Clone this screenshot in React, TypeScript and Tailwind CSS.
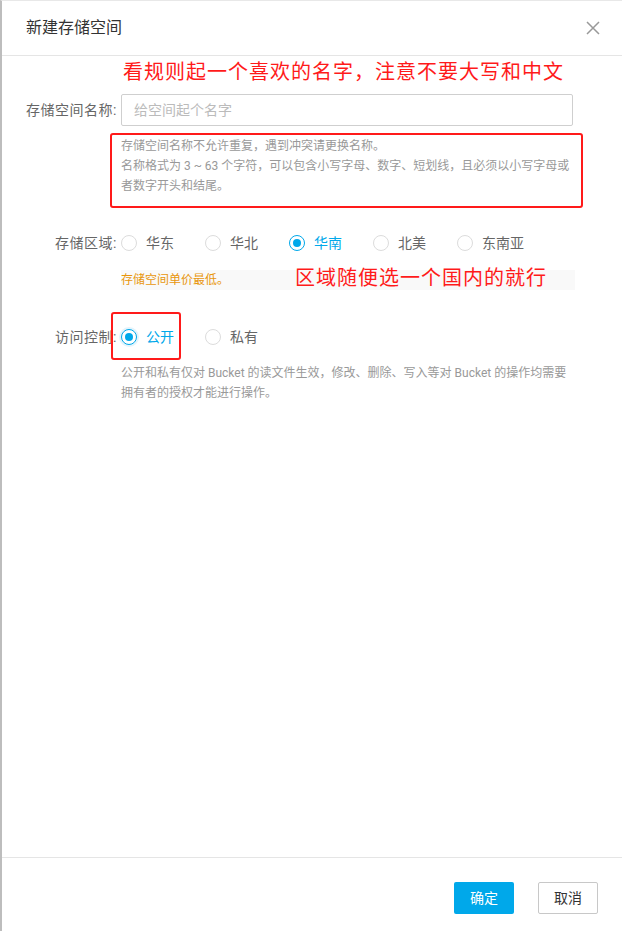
import React from "react";

const regions = ["华东", "华北", "华南", "北美", "东南亚"];

function Radio({
  label,
  checked,
  halo,
}: {
  label: string;
  checked?: boolean;
  halo?: boolean;
}) {
  return (
    <div className="flex w-[84px] items-center">
      <span
        className={
          checked
            ? "flex h-[16px] w-[16px] items-center justify-center rounded-full border border-[#00a8ea] bg-white"
            : "h-[16px] w-[16px] rounded-full border border-[#dcdcdc] bg-white"
        }
        style={halo ? { boxShadow: "0 0 0 2px #e3f4fc" } : undefined}
      >
        {checked && <span className="h-[8px] w-[8px] rounded-full bg-[#00a8ea]" />}
      </span>
      <span
        className={
          checked
            ? "ml-[9px] text-[14px] leading-[20px] text-[#00a8ea]"
            : "ml-[9px] text-[14px] leading-[20px] text-[#666]"
        }
      >
        {label}
      </span>
    </div>
  );
}

export default function App() {
  return (
    <div className="flex h-[931px] w-[622px] flex-col border-l-2 border-t border-l-[#bdbdbd] border-t-[#e8e8e8] bg-white font-['Roboto','Noto_Sans_CJK_SC',sans-serif]">
      {/* header */}
      <div className="flex h-[55px] shrink-0 items-center justify-between border-b border-[#e5e5e5] pl-[24px] pr-[22px]">
        <span className="text-[16px] text-[#333]">新建存储空间</span>
        <svg width="14" height="14" viewBox="0 0 14 14" className="mt-[-1px]">
          <path d="M1 1L13 13M13 1L1 13" stroke="#999" strokeWidth="1.5" fill="none" />
        </svg>
      </div>

      {/* body */}
      <div className="flex-1">
        <div className="ml-[121px] mt-[2px] text-[20px] leading-[28px] tracking-[1px] text-[#ff1a1a]">
          看规则起一个喜欢的名字，注意不要大写和中文
        </div>

        <div className="mt-[8px] flex items-center">
          <label className="w-[115px] text-right text-[14px] tracking-[0.5px] text-[#666]">存储空间名称:</label>
          <div className="ml-[4px] flex h-[32px] w-[452px] items-center rounded-[2px] border border-[#cfcfcf] pl-[12px] text-[14px] text-[#bbb]">
            给空间起个名字
          </div>
        </div>

        <div className="ml-[108px] mt-[7px] w-[473px] rounded-[3px] border-2 border-[#ff1a1a] pb-[10px] pl-[9px] pt-[1px] text-[12px] leading-[20px] text-[#999]">
          <div>存储空间名称不允许重复，遇到冲突请更换名称。</div>
          <div>名称格式为 3 ~ 63 个字符，可以包含小写字母、数字、短划线，且必须以小写字母或</div>
          <div>者数字开头和结尾。</div>
        </div>

        <div className="mt-[25px] flex items-center">
          <label className="w-[115px] text-right text-[14px] leading-[20px] tracking-[0.5px] text-[#666]">存储区域:</label>
          <div className="ml-[4px] flex">
            {regions.map((r) => (
              <Radio key={r} label={r} checked={r === "华南"} />
            ))}
          </div>
        </div>

        <div className="ml-[119px] mt-[17px] flex h-[20px] w-[454px] items-center bg-[#f9f9f9]">
          <span className="w-[174px] text-[12px] text-[#e8960c]">存储空间单价最低。</span>
          <span className="mt-[-4px] text-[20px] leading-[20px] tracking-[1px] text-[#ff1a1a]">区域随便选一个国内的就行</span>
        </div>

        <div className="relative mt-[37px] flex items-center">
          <label className="w-[115px] text-right text-[14px] leading-[20px] tracking-[0.5px] text-[#666]">访问控制:</label>
          <div className="ml-[4px] flex">
            <Radio label="公开" checked halo />
            <Radio label="私有" />
          </div>
          <div className="absolute left-[109px] top-[-15px] h-[48px] w-[70px] rounded-[3px] border-2 border-[#ff1a1a]" />
        </div>

        <div className="ml-[119px] mt-[16px] text-[12px] leading-[20px] text-[#999]">
          <div>公开和私有仅对 Bucket 的读文件生效，修改、删除、写入等对 Bucket 的操作均需要</div>
          <div>拥有者的授权才能进行操作。</div>
        </div>
      </div>

      {/* footer */}
      <div className="flex h-[74px] shrink-0 justify-end gap-[24px] border-t border-[#e5e5e5] pr-[24px] pt-[24px]">
        <button className="h-[32px] w-[60px] rounded-[2px] bg-[#00a8ea] text-[14px] text-white">确定</button>
        <button className="h-[32px] w-[60px] rounded-[2px] border border-[#c8c8c8] bg-white text-[14px] text-[#333]">取消</button>
      </div>
    </div>
  );
}
